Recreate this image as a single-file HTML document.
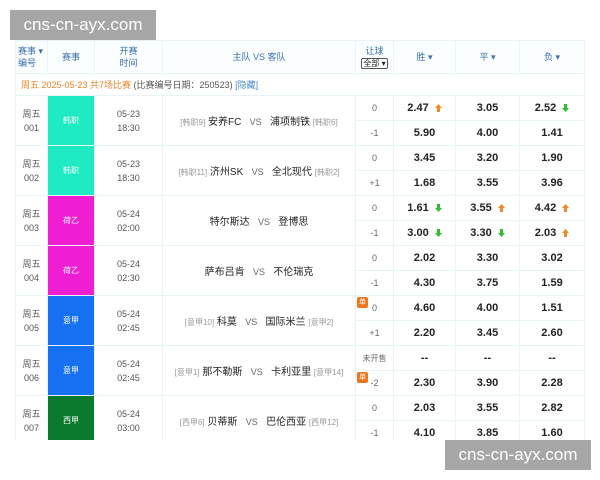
<!DOCTYPE html><html><head><meta charset="utf-8"><style>
body{margin:0;width:600px;height:480px;background:#fff;position:relative;overflow:hidden;font-family:"Liberation Sans","Noto Sans CJK SC",sans-serif;}
table{position:absolute;left:15px;top:40px;border-collapse:collapse;table-layout:fixed;width:569px;}
td{border:1px solid #e8f4f5;padding:0;text-align:center;font-size:9px;color:#444;overflow:hidden;white-space:nowrap}
tr.h td{height:32px;color:#3a6fb0;background:#fafeff;font-size:9px;line-height:12px}
tr.i td{height:21px;text-align:left;padding-left:5px;font-size:9px;color:#555}
tr.s td{height:24px}
.n{color:#555;line-height:14px}
.lg{color:#fff;font-size:8px}
.t{line-height:14px;color:#555}
.tm{font-size:10px;color:#222}
.tm small{font-size:8px;color:#999}
.o{font-weight:bold;font-size:11px;color:#222}
.hc{color:#666;font-size:9px}
.up,.dn{display:inline-block;width:7px;height:8px;margin-left:6px;vertical-align:-1px}
.wm{position:absolute;background:#a6a6a6;color:#fff;font-size:17px;line-height:30px;width:146px;text-align:center;}
.d{position:absolute;left:1px;width:11px;height:11px;background:#ee7722;border-radius:2px;color:#fff;font-size:7px;line-height:11px}
</style></head><body>
<svg width="0" height="0" style="position:absolute"><defs>
<symbol id="u" viewBox="0 0 7 8"><path d="M3.5 0L7 4H5V8H2V4H0Z" fill="#f08a24"/></symbol>
<symbol id="g" viewBox="0 0 7 8"><path d="M3.5 8L7 4H5V0H2V4H0Z" fill="#33bb33"/></symbol></defs></svg>
<table>
<colgroup><col style="width:32px"><col style="width:47px"><col style="width:68px"><col style="width:193px"><col style="width:38px"><col style="width:62px"><col style="width:64px"><col style="width:65px"></colgroup>
<tr class="h"><td style="text-align:left;padding-left:2px">赛事 ▾<br>编号</td><td>赛事</td><td>开赛<br>时间</td><td>主队 VS 客队</td><td>让球<br><span style="border:1px solid #555;border-radius:2px;color:#222;padding:0 1px;font-size:8px">全部 ▾</span></td><td>胜 ▾</td><td>平 ▾</td><td>负 ▾</td></tr>
<tr class="i"><td colspan="8"><span style="color:#e8862a">周五 2025-05-23 共7场比赛</span> (比赛编号日期：250523) <span style="color:#4a8ad0">[隐藏]</span></td></tr>

<tr class="s"><td rowspan="2" class="n">周五<br>001</td><td rowspan="2" class="lg" style="background:#1eeac4">韩职</td><td rowspan="2" class="t">05-23<br>18:30</td><td rowspan="2" class="tm"><small>[韩职9]</small> 安养FC &nbsp; <small style="font-size:9px;color:#666">VS</small> &nbsp; 浦项制铁 <small>[韩职6]</small></td><td class="hc">0</td><td class="o">2.47<svg class="up"><use href="#u"/></svg></td><td class="o">3.05</td><td class="o">2.52<svg class="dn"><use href="#g"/></svg></td></tr>
<tr class="s"><td class="hc">-1</td><td class="o">5.90</td><td class="o">4.00</td><td class="o">1.41</td></tr>

<tr class="s"><td rowspan="2" class="n">周五<br>002</td><td rowspan="2" class="lg" style="background:#1eeac4">韩职</td><td rowspan="2" class="t">05-23<br>18:30</td><td rowspan="2" class="tm"><small>[韩职11]</small> 济州SK &nbsp; <small style="font-size:9px;color:#666">VS</small> &nbsp; 全北现代 <small>[韩职2]</small></td><td class="hc">0</td><td class="o">3.45</td><td class="o">3.20</td><td class="o">1.90</td></tr>
<tr class="s"><td class="hc">+1</td><td class="o">1.68</td><td class="o">3.55</td><td class="o">3.96</td></tr>

<tr class="s"><td rowspan="2" class="n">周五<br>003</td><td rowspan="2" class="lg" style="background:#f01ed2">荷乙</td><td rowspan="2" class="t">05-24<br>02:00</td><td rowspan="2" class="tm">特尔斯达 &nbsp; <small style="font-size:9px;color:#666">VS</small> &nbsp; 登博思</td><td class="hc">0</td><td class="o">1.61<svg class="dn"><use href="#g"/></svg></td><td class="o">3.55<svg class="up"><use href="#u"/></svg></td><td class="o">4.42<svg class="up"><use href="#u"/></svg></td></tr>
<tr class="s"><td class="hc">-1</td><td class="o">3.00<svg class="dn"><use href="#g"/></svg></td><td class="o">3.30<svg class="dn"><use href="#g"/></svg></td><td class="o">2.03<svg class="up"><use href="#u"/></svg></td></tr>

<tr class="s"><td rowspan="2" class="n">周五<br>004</td><td rowspan="2" class="lg" style="background:#f01ed2">荷乙</td><td rowspan="2" class="t">05-24<br>02:30</td><td rowspan="2" class="tm">萨布吕肯 &nbsp; <small style="font-size:9px;color:#666">VS</small> &nbsp; 不伦瑞克</td><td class="hc">0</td><td class="o">2.02</td><td class="o">3.30</td><td class="o">3.02</td></tr>
<tr class="s"><td class="hc">-1</td><td class="o">4.30</td><td class="o">3.75</td><td class="o">1.59</td></tr>

<tr class="s"><td rowspan="2" class="n">周五<br>005</td><td rowspan="2" class="lg" style="background:#1570f2">意甲</td><td rowspan="2" class="t">05-24<br>02:45</td><td rowspan="2" class="tm"><small>[意甲10]</small> 科莫 &nbsp; <small style="font-size:9px;color:#666">VS</small> &nbsp; 国际米兰 <small>[意甲2]</small></td><td class="hc" style="position:relative"><span class="d" style="top:1px">单</span>0</td><td class="o">4.60</td><td class="o">4.00</td><td class="o">1.51</td></tr>
<tr class="s"><td class="hc">+1</td><td class="o">2.20</td><td class="o">3.45</td><td class="o">2.60</td></tr>

<tr class="s"><td rowspan="2" class="n">周五<br>006</td><td rowspan="2" class="lg" style="background:#1570f2">意甲</td><td rowspan="2" class="t">05-24<br>02:45</td><td rowspan="2" class="tm"><small>[意甲1]</small> 那不勒斯 &nbsp; <small style="font-size:9px;color:#666">VS</small> &nbsp; 卡利亚里 <small>[意甲14]</small></td><td class="hc" style="font-size:8px">未开售</td><td class="o">--</td><td class="o">--</td><td class="o">--</td></tr>
<tr class="s"><td class="hc" style="position:relative"><span class="d" style="top:1px">单</span>-2</td><td class="o">2.30</td><td class="o">3.90</td><td class="o">2.28</td></tr>

<tr class="s"><td rowspan="2" class="n">周五<br>007</td><td rowspan="2" class="lg" style="background:#0a7a2c">西甲</td><td rowspan="2" class="t">05-24<br>03:00</td><td rowspan="2" class="tm"><small>[西甲6]</small> 贝蒂斯 &nbsp; <small style="font-size:9px;color:#666">VS</small> &nbsp; 巴伦西亚 <small>[西甲12]</small></td><td class="hc">0</td><td class="o">2.03</td><td class="o">3.55</td><td class="o">2.82</td></tr>
<tr class="s"><td class="hc">-1</td><td class="o">4.10</td><td class="o">3.85</td><td class="o">1.60</td></tr>
</table>
<div style="position:absolute;left:0;top:440px;width:600px;height:40px;background:#fff"></div>
<div class="wm" style="left:10px;top:10px">cns-cn-ayx.com</div>
<div class="wm" style="left:445px;top:440px">cns-cn-ayx.com</div>
</body></html>
